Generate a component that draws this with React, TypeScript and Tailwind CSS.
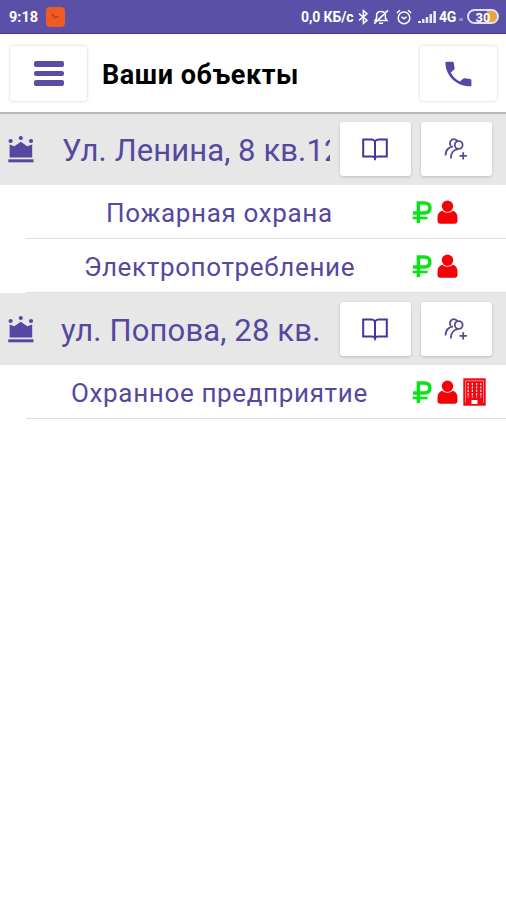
import type { ReactNode } from 'react';

type Service = { name: string; textClass: string; building?: boolean };

type Property = { address: string; textClass: string; services: Service[] };

const properties: Property[] = [
  {
    address: 'Ул. Ленина, 8 кв.12',
    textClass: 'pl-[28px] tracking-[0.1px]',
    services: [
      { name: 'Пожарная охрана', textClass: 'pl-[106px]' },
      { name: 'Электропотребление', textClass: 'pl-[84px]' },
    ],
  },
  {
    address: 'ул. Попова, 28 кв.',
    textClass: 'pl-[27px] tracking-[0.15px]',
    services: [{ name: 'Охранное предприятие', textClass: 'pl-[71px]', building: true }],
  },
];

function CrownIcon() {
  return (
    <svg className="h-[28px] w-[26px] shrink-0" viewBox="0 0 26 28" fill="#5548a3">
      <circle cx="2.6" cy="6" r="2.1" />
      <circle cx="12.8" cy="3" r="2.1" />
      <circle cx="23" cy="6" r="2.1" />
      <path d="M1.6 9.5 6.4 11.2 12.8 6.8 19.2 11.2 24.2 9.5V22.4H1.6Z" />
      <rect x="0.3" y="24.3" width="25.2" height="3" />
    </svg>
  );
}

function BookIcon() {
  return (
    <svg className="-ml-[2px] h-6 w-[26px]" viewBox="0 0 26 24" fill="none" stroke="#43369a" strokeWidth="2">
      <path d="M13 4.6C12.3 3.2 11 2.6 9.5 2.6H1.2V19.6H10C11.8 19.6 12.6 20 13 21.2C13.4 20 14.2 19.6 16 19.6H24.8V2.6H16.5C15 2.6 13.7 3.2 13 4.6V22.8" />
    </svg>
  );
}

function AddPeopleIcon() {
  return (
    <svg className="-ml-[2px] h-6 w-6" viewBox="0 0 24 24" fill="none" stroke="#554b91" strokeWidth="1.8">
      <path d="M6.9 8.8A4 4 0 1 1 13.4 4.2" />
      <circle cx="14.7" cy="8" r="3.9" />
      <path d="M1.5 18.5C1.6 13.6 4 10.3 9 9.4M6.9 21.5C6.8 16.5 9.5 12.6 14 12.1" />
      <path d="M19.2 15.2V22.6M15.5 18.9H22.9" />
    </svg>
  );
}

function RubleIcon() {
  return (
    <svg className="h-[23px] w-5" viewBox="0 0 20 23" fill="none" stroke="#0be318">
      <path d="M6.4 22V2.1H12.3C16 2.1 17.9 3.9 17.9 7C17.9 10 16 11.9 12.3 11.9H1" strokeWidth="3.5" />
      <path d="M0.6 17H15.5" strokeWidth="2.6" />
    </svg>
  );
}

function PersonIcon() {
  return (
    <svg className="h-6 w-[21px]" viewBox="0 0 21 24" fill="#f70008">
      <circle cx="10.5" cy="6.2" r="5.7" />
      <path d="M5.2 10.8C2 12 .5 14 .5 18V21.3Q.5 23.7 3 23.7H18Q20.5 23.7 20.5 21.3V18C20.5 14 19 12 15.8 10.8C13.2 13.4 7.8 13.4 5.2 10.8Z" />
    </svg>
  );
}

function BuildingIcon() {
  return (
    <svg className="h-7 w-[23px]" viewBox="0 0 23 28">
      <path fill="#f00812" d="M.3.3H22.7V27.7H.3Z" />
      <path
        fill="none"
        stroke="#ffd9d9"
        strokeWidth="1.3"
        strokeDasharray="2.2 1.2"
        d="M5.2 5V19.5M9.4 5V19.5M13.6 5V19.5M17.8 5V19.5"
      />
      <path fill="none" stroke="#ff9c9c" strokeWidth="0.8" d="M2.5 24.5V2.8H20.5V24.5" />
      <path fill="#fff" d="M8.5 22H14.5V26H8.5Z" />
    </svg>
  );
}

function RowButton({ children }: { children: ReactNode }) {
  return (
    <button className="flex h-[54px] w-[71px] shrink-0 items-center justify-center rounded-[3px] bg-white shadow-[0_1px_3px_rgba(0,0,0,0.18)]">
      {children}
    </button>
  );
}

function StatusBar() {
  return (
    <div className="flex h-[34px] items-center border-b border-[#49399a] bg-[#5b50a8] pl-[9px] pr-[7px] font-bold text-white">
      <span className="w-[37px] pt-[2px] text-[14.5px]">9:18</span>
      <svg className="h-5 w-[19px]" viewBox="0 0 19 20">
        <rect width="19" height="20" rx="4" fill="#ef5b20" />
        <path d="M5.5 7 8 9M7 9.5 9.5 10.5 12.5 9.5" stroke="#a83c2d" strokeWidth="1.2" fill="none" />
      </svg>
      <span className="ml-auto w-[57px] whitespace-nowrap pt-[2px] text-[14px] tracking-[-0.1px]">0,0 КБ/с</span>
      <svg className="h-4 w-[11px]" viewBox="0 0 11 16" fill="none" stroke="#fff" strokeWidth="1.5">
        <path d="M1 4.7 9 11.2 5.4 14.3V1.7L9 4.8 1 11.3" />
      </svg>
      <svg className="ml-[4px] h-4 w-4" viewBox="0 0 16 16" fill="none" stroke="#fff" strokeWidth="1.5">
        <path d="M2 11.6H14L12.4 9.3V6.3C12.4 3.8 10.4 2.4 8 2.4S3.6 3.8 3.6 6.3V9.3ZM6 14.2H10M1.2 14.6 15 1.4" />
      </svg>
      <svg className="ml-[7px] h-4 w-4" viewBox="0 0 16 16" fill="none" stroke="#fff" strokeWidth="1.5">
        <circle cx="8" cy="8.9" r="5.8" />
        <path d="M.8 4 4 1.2M15.2 4 12 1.2M5.5 7.8 7.8 9.8 10.6 7.8" />
      </svg>
      <svg className="ml-[6px] h-[14px] w-[19px]" viewBox="0 0 19 14" fill="#e9e6fa">
        <path d="M0 11H3V13H0ZM4 9H6.5V13H4ZM7.7 7H10.2V13H7.7ZM11.5 4H14V13H11.5ZM15.3 1H18V13H15.3Z" />
      </svg>
      <span className="ml-[2px] w-[20px] pt-[2px] text-[14px] tracking-[-0.2px]">4G</span>
      <span className="mt-[5px] h-[3px] w-[4px] bg-[#8f86cb]" />
      <span className="ml-[4px] flex h-[15px] w-[32px] items-center justify-center rounded-full border-2 border-[#e3dff5] bg-[linear-gradient(90deg,#5b50a8_64%,#e9a43c_64%)] pt-px text-[13px] leading-none">
        30
      </span>
    </div>
  );
}

function Header() {
  return (
    <header className="relative z-10 flex h-[80px] items-center border-b-2 border-[#b9b9b9] bg-white pl-[10px] pr-[9px]">
      <button className="flex h-[55px] w-[77px] items-center justify-center rounded-[3px] shadow-[0_0_3px_rgba(0,0,0,0.2)]">
        <span className="flex w-[30px] flex-col gap-1">
          <span className="h-[6px] rounded-[2px] bg-[#5a4da6]" />
          <span className="h-[5px] rounded-[2px] bg-[#5a4da6]" />
          <span className="h-[6px] rounded-[2px] bg-[#5a4da6]" />
        </span>
      </button>
      <h1 className="ml-[15px] mt-1 whitespace-nowrap text-[27px] font-bold leading-8 tracking-[0.55px] text-black">
        Ваши объекты
      </h1>
      <button className="ml-auto flex h-[55px] w-[77px] items-center justify-center rounded-[3px] shadow-[0_0_3px_rgba(0,0,0,0.2)]">
        <svg className="mt-[2px] h-[26px] w-[27px]" viewBox="0 0 27 27" fill="#5547a4" preserveAspectRatio="none">
          <path d="M1.3.8H7.5Q8.7.8 8.8 2L9.6 7.5Q9.7 8.5 8.9 9.2L5.8 12C8 16.5 11 19.5 15 21.4L18 18.4Q18.8 17.7 19.8 17.9L25.2 18.7Q26.4 19 26.4 20V26.2H23C11 25.5 1.5 16 .5 4V1.6Q.5.8 1.3.8Z" />
        </svg>
      </button>
    </header>
  );
}

export default function App() {
  return (
    <div className="h-[900px] w-[506px] overflow-hidden bg-white font-['Roboto','Noto_Sans',sans-serif]">
      <StatusBar />
      <Header />
      <main className="-mt-px">
        {properties.map((property) => (
          <section key={property.address}>
            <div className="flex h-[72px] items-center bg-[#e7e7e7] pl-2 pr-[14px]">
              <CrownIcon />
              <span
                className={`mr-[10px] w-[296px] shrink-0 overflow-hidden whitespace-nowrap pt-[3px] text-[31px] leading-[42px] text-[#5548a0] ${property.textClass}`}
              >
                {property.address}
              </span>
              <RowButton>
                <BookIcon />
              </RowButton>
              <span className="w-[10px]" />
              <RowButton>
                <AddPeopleIcon />
              </RowButton>
            </div>
            {property.services.map((service) => (
              <div key={service.name} className="relative flex h-[54px] items-center">
                <span
                  className={`w-[412px] shrink-0 whitespace-nowrap pt-[1px] text-[26px] leading-[30px] tracking-[0.65px] text-[#5548a0] ${service.textClass}`}
                >
                  {service.name}
                </span>
                <span className="flex items-center gap-[5px]">
                  <RubleIcon />
                  <PersonIcon />
                  {service.building && <BuildingIcon />}
                </span>
                <span className="absolute bottom-0 left-[26px] right-0 h-px bg-[#dedede]" />
              </div>
            ))}
          </section>
        ))}
      </main>
    </div>
  );
}
